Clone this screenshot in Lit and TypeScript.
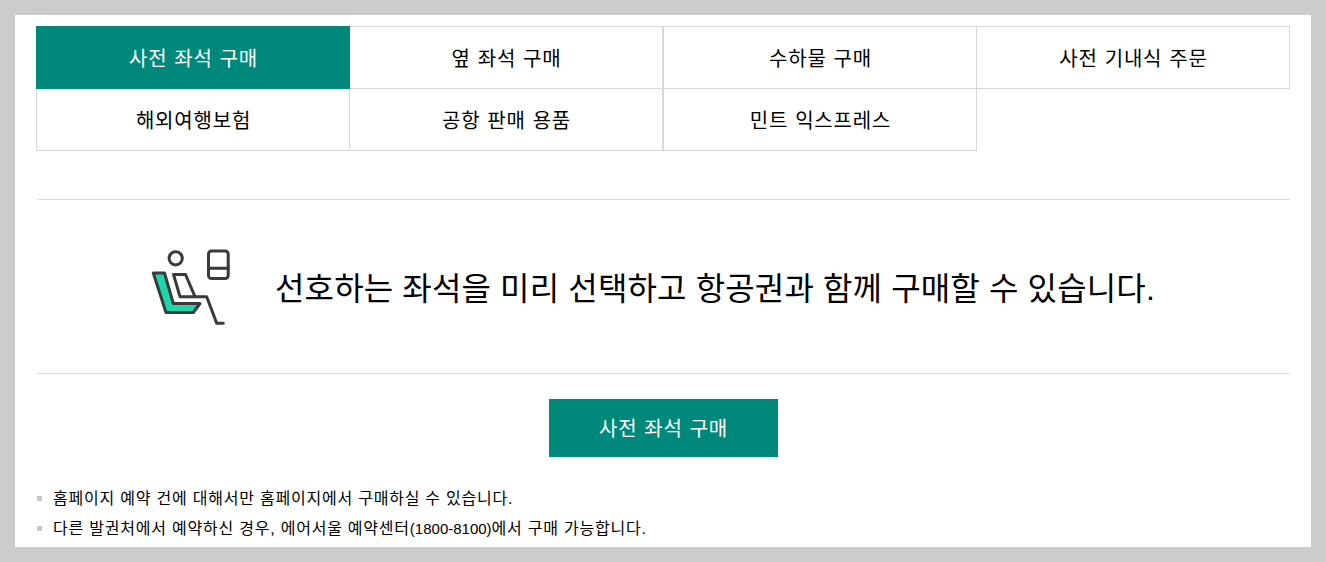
import { LitElement, html, css } from "lit";
import { customElement } from "lit/decorators.js";

const tabs = ["사전 좌석 구매", "옆 좌석 구매", "수하물 구매", "사전 기내식 주문", "해외여행보험", "공항 판매 용품", "민트 익스프레스"];

@customElement("app-root")
export class AppRoot extends LitElement {
  static styles = css`
    :host { display: block; height: 562px; box-sizing: border-box; padding: 15px; background: #ccc; overflow: hidden;
      font-family: "Liberation Sans", "Noto Sans CJK KR", sans-serif; color: #000; }
    .panel { background: #fff; height: 532px; box-sizing: border-box; padding: 11px 21px 0; overflow: hidden; }
    .tabs { display: grid; grid-template-columns: 314px 313px 314px 313px; grid-auto-rows: 62px; width: 1254px; }
    .tab { display: flex; align-items: center; justify-content: center; box-sizing: border-box; height: 63px;
      font-size: 20px; letter-spacing: 0.8px; word-spacing: 0.6px; padding-left: 1px;
      border-top: 1px solid #d8d8d8; border-right: 1px solid #d8d8d8; border-bottom: 1px solid #d8d8d8; }
    .tab:nth-child(1), .tab:nth-child(3), .tab:nth-child(5), .tab:nth-child(7) { border-left: 1px solid #d8d8d8; }
    .tab.active { background: #00897b; color: #fff; border-color: #00897b; position: relative; z-index: 1; }
    .intro { margin: 49px 0 0 1px; height: 173px; border-top: 1px solid #ddd; border-bottom: 1px solid #ddd;
      display: flex; align-items: center; padding-left: 93px; gap: 25px; }
    .intro svg { width: 120px; height: 110px; flex: none; margin-bottom: 3px; }
    .intro p { margin: 0 0 2px; font-size: 32px; letter-spacing: 0.14px; white-space: nowrap; }
    .cta { display: flex; justify-content: center; margin-top: 25px; }
    .btn { width: 229px; height: 58px; background: #00897b; color: #fff; border: 0; padding: 0 0 2px 1px;
      font: inherit; font-size: 20px; letter-spacing: 0.8px; word-spacing: 0.6px; }
    ul { list-style: none; margin: 27px 0 0; padding: 0; }
    li { position: relative; font-size: 16px; letter-spacing: 0.78px; line-height: 30px; padding-left: 17px; white-space: nowrap; }
    li::before { content: ""; position: absolute; left: 1px; top: 12px; width: 5px; height: 5px; background: #c8c8c8; }
    .latin { font-size: 15px; letter-spacing: 0; }
  `;

  render() {
    return html`<div class="panel">
      <div class="tabs">
        ${tabs.map((t, i) => html`<div class="tab ${i === 0 ? "active" : ""}">${t}</div>`)}
      </div>
      <div class="intro">
        <svg viewBox="0 0 120 110" fill="none" stroke="#3a3a3a" stroke-width="3" stroke-linejoin="round" stroke-linecap="round">
          <path d="M23.3 43H34.5L43.3 73.5H70L63.3 82.5H36Z" fill="#1fd6ac" />
          <circle cx="45.7" cy="28.3" r="6.6" />
          <rect x="78.5" y="21" width="19.7" height="27.5" rx="3" />
          <path d="M78.5 38.3H98.2" />
          <path d="M43.5 44.5H55.5L65 66.7H50Z" />
          <path d="M65 66.7H76.7L86.7 93.3H93.3" />
        </svg>
        <p>선호하는 좌석을 미리 선택하고 항공권과 함께 구매할 수 있습니다.</p>
      </div>
      <div class="cta"><button class="btn">사전 좌석 구매</button></div>
      <ul>
        <li>홈페이지 예약 건에 대해서만 홈페이지에서 구매하실 수 있습니다.</li>
        <li>다른 발권처에서 예약하신 경우, 에어서울 예약센터<span class="latin">(1800-8100)</span>에서 구매 가능합니다.</li>
      </ul>
    </div>`;
  }
}
